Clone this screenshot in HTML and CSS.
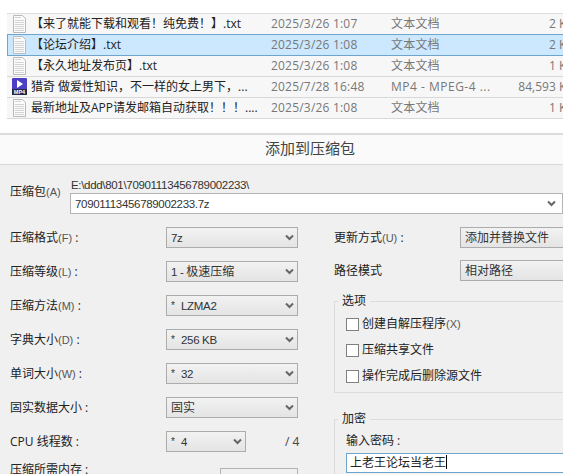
FILE: index.html
```html
<!DOCTYPE html>
<html lang="zh">
<head>
<meta charset="utf-8">
<title>添加到压缩包</title>
<link rel="stylesheet" href="styles.css">
</head>
<body>
<svg class="defs" width="0" height="0" aria-hidden="true">
  <symbol id="txt" viewBox="0 0 15 18">
    <path d="M1.5.5h9l3 3v14h-12z" fill="#fbfbfb" stroke="#b9b9b9"/>
    <path d="M3 2.5h6M3 5.5h9M3 7.5h9M3 9.5h9M3 11.5h9M3 13.5h9M3 15.5h9" stroke="#d4d4d4"/>
  </symbol>
  <symbol id="chev" viewBox="0 0 9 7">
    <path d="M1 1.5l3.5 3.5L8 1.5" fill="none" stroke="#666" stroke-width="2"/>
  </symbol>
</svg>

<section class="files">
  <div class="file">
    <svg class="ico"><use href="#txt"/></svg>
    <span class="name">【来了就能下载和观看！纯免费！】.txt</span>
    <span class="date">2025/3/26 1:07</span><span class="type">文本文档</span><span class="size">2 KB</span>
  </div>
  <div class="file sel">
    <svg class="ico"><use href="#txt"/></svg>
    <span class="name">【论坛介绍】.txt</span>
    <span class="date">2025/3/26 1:08</span><span class="type">文本文档</span><span class="size">2 KB</span>
  </div>
  <div class="file">
    <svg class="ico"><use href="#txt"/></svg>
    <span class="name">【永久地址发布页】.txt</span>
    <span class="date">2025/3/26 1:08</span><span class="type">文本文档</span><span class="size">1 KB</span>
  </div>
  <div class="file">
    <svg class="ico" viewBox="0 0 15 18">
      <rect x="0" y="0" width="15" height="17" rx="1" fill="#4d3fc4"/>
      <path d="M5 2l6 4-6 4z" fill="#fff"/>
      <rect x="0" y="11" width="15" height="6" fill="#26264a"/>
      <text x="7.5" y="16.4" class="mp4">MP4</text>
    </svg>
    <span class="name">猎奇 做爱性知识，不一样的女上男下，...</span>
    <span class="date">2025/7/28 16:48</span><span class="type wide-type">MP4 - MPEG-4 ...</span><span class="size">84,593 KB</span>
  </div>
  <div class="file">
    <svg class="ico"><use href="#txt"/></svg>
    <span class="name">最新地址及APP请发邮箱自动获取！！！....</span>
    <span class="date">2025/3/26 1:08</span><span class="type">文本文档</span><span class="size">1 KB</span>
  </div>
</section>

<main class="dialog">
  <header class="title">添加到压缩包</header>

  <div class="archive">
    <span class="lab">压缩包<small>(A)</small></span>
    <div class="archive-fields">
      <div class="path lat">E:\ddd\801\70901113456789002233\</div>
      <div class="combo">
        <span class="lat">70901113456789002233.7z</span>
        <svg class="chev"><use href="#chev"/></svg>
      </div>
    </div>
  </div>

  <div class="cols">
    <div class="left">
      <div class="row"><span class="lab">压缩格式<small>(F)</small> :</span><div class="sel-box"><span class="lat">7z</span><svg class="chev"><use href="#chev"/></svg></div></div>
      <div class="row"><span class="lab">压缩等级<small>(L)</small> :</span><div class="sel-box"><span><span class="lat">1 - </span>极速压缩</span><svg class="chev"><use href="#chev"/></svg></div></div>
      <div class="row"><span class="lab">压缩方法<small>(M)</small> :</span><div class="sel-box"><span class="lat"><span class="star">*</span>LZMA2</span><svg class="chev"><use href="#chev"/></svg></div></div>
      <div class="row"><span class="lab">字典大小<small>(D)</small> :</span><div class="sel-box"><span class="lat"><span class="star">*</span>256 KB</span><svg class="chev"><use href="#chev"/></svg></div></div>
      <div class="row"><span class="lab">单词大小<small>(W)</small> :</span><div class="sel-box"><span class="lat"><span class="star">*</span>32</span><svg class="chev"><use href="#chev"/></svg></div></div>
      <div class="row"><span class="lab">固实数据大小 :</span><div class="sel-box"><span>固实</span><svg class="chev"><use href="#chev"/></svg></div></div>
      <div class="row"><span class="lab">CPU 线程数 :</span><div class="sel-box short"><span class="lat"><span class="star">*</span>4</span><svg class="chev"><use href="#chev"/></svg></div><span class="of">/ 4</span></div>
      <div class="row mem"><span class="lab">压缩所需内存 :</span><div class="mem-box"></div></div>
    </div>

    <div class="right">
      <div class="row first"><span class="lab">更新方式<small>(U)</small> :</span><div class="sel-box wide"><span>添加并替换文件</span></div></div>
      <div class="row"><span class="lab">路径模式</span><div class="sel-box wide"><span>相对路径</span></div></div>

      <fieldset class="group opts">
        <legend>选项</legend>
        <label class="check"><input type="checkbox">创建自解压程序<small>(X)</small></label>
        <label class="check"><input type="checkbox">压缩共享文件</label>
        <label class="check"><input type="checkbox">操作完成后删除源文件</label>
      </fieldset>

      <fieldset class="group enc">
        <legend>加密</legend>
        <div class="pw-label">输入密码 :</div>
        <div class="pw">上老王论坛当老王<i class="caret"></i></div>
      </fieldset>
    </div>
  </div>
</main>
</body>
</html>
```
FILE: styles.css
```css
* { box-sizing: border-box; }
html, body { margin: 0; height: 474px; overflow: hidden; }
body {
  width: 563px;
  background: #fff;
  color: #333;
  font: 12px/16px "Open Sans", "Noto Sans CJK SC", sans-serif;
}
.defs { position: absolute; }
small { font: 11px/16px "Liberation Sans", sans-serif; color: #555; }
.lat { font: 11.5px/16px "Liberation Sans", sans-serif; letter-spacing: -.32px; }
.star { display: inline-block; width: 10px; vertical-align: 1px; font-size: 10px; }

.files {
  width: 620px;
  margin: 13px 0 0 7px;
  border-top: 1px solid #ddd;
}
.file {
  display: flex;
  align-items: center;
  height: 21px;
  background: #f7f7f7;
  border-bottom: 1px solid #d8d8d8;
}
.file.sel {
  background: #cce8ff;
  border: 1px solid #6ea5cf;
  margin-top: -1px;
  height: 22px;
}
.ico { width: 15px; height: 18px; margin-left: 5px; flex: none; }
.file.sel .ico { margin-left: 4px; }
.mp4 { font: bold 5.5px "Liberation Sans", sans-serif; fill: #fff; text-anchor: middle; }
.name { width: 240px; margin-left: 4px; flex: none; color: #222; white-space: nowrap; overflow: hidden; }
.date { width: 120px; flex: none; color: #777; letter-spacing: .2px; }
.type { width: 100px; flex: none; color: #777; white-space: nowrap; letter-spacing: .2px; }
.wide-type { letter-spacing: .5px; }
.size { width: 83px; flex: none; color: #777; text-align: right; white-space: nowrap; }

.dialog {
  margin-top: 14px;
  border-top: 2px solid #dcdcdc;
  background: #f0f0f0;
  height: 400px;
}
.title {
  height: 30px;
  background: #fafafa;
  border-bottom: 1px solid #d9d9d9;
  text-align: center;
  font-size: 15px;
  line-height: 27px;
  color: #444;
  padding-left: 57px;
}
.lab { color: #222; white-space: nowrap; }

.archive { display: flex; align-items: center; padding: 12px 0 0 10px; }
.archive .lab { width: 60px; margin-top: -7px; }
.path { padding-left: 1px; color: #333; }
.combo {
  display: flex; align-items: center; justify-content: space-between;
  width: 493px; height: 21px;
  padding: 0 6px 0 4px;
  background: #fff;
  border: 1px solid #b4b4b4;
}
.chev { width: 9px; height: 7px; flex: none; }

.cols { display: flex; margin-top: 13px; }
.left { width: 334px; flex: none; padding-left: 10px; }
.right { flex: none; width: 300px; }
.row { display: flex; align-items: center; height: 21px; margin-bottom: 13px; }
.row .lab { flex: none; }
.left .lab { width: 156px; }
.right .lab { width: 126px; }
.right .row.first { margin-bottom: 12px; }
.sel-box {
  display: flex; align-items: center; justify-content: space-between;
  width: 132px; height: 21px;
  padding: 0 3px 0 4px;
  background: linear-gradient(#f2f2f2, #e4e4e4);
  border: 1px solid #acacac;
  white-space: nowrap;
}
.sel-box.short { width: 80px; }
.sel-box.wide { width: 200px; }
.of { margin-left: 39px; color: #444; }
.row.mem { align-items: flex-start; margin-top: 13px; }
.row.mem .lab { width: 210px; margin-top: -3px; }
.mem-box { flex: none; width: 78px; height: 21px; margin-top: 3px; background: #f0f0f0; border: 1px solid #b4b4b4; }

.group { margin: 0; padding: 0 0 0 11px; border: 1px solid #dcdcdc; width: 300px; }
.group legend { padding: 0 4px; margin-left: -8px; line-height: 14px; color: #222; }
.opts { height: 99px; margin-top: 11px; }
.check { display: flex; align-items: center; height: 26px; color: #222; }
.check:first-of-type { margin-top: 3px; }
.check input {
  appearance: none; flex: none; width: 13px; height: 13px; margin: 0 3px 0 0;
  background: #fff; border: 1px solid #808080;
}
.enc { margin-top: 19px; height: 80px; }
.pw-label { margin-top: 7px; height: 20px; color: #222; }
.pw {
  width: 240px; height: 20px;
  padding: 0 3px;
  background: #fff;
  border: 1px solid #6ea5cf;
  color: #222;
  line-height: 18px;
}
.caret { display: inline-block; width: 1px; height: 14px; background: #000; vertical-align: -2px; }
```
